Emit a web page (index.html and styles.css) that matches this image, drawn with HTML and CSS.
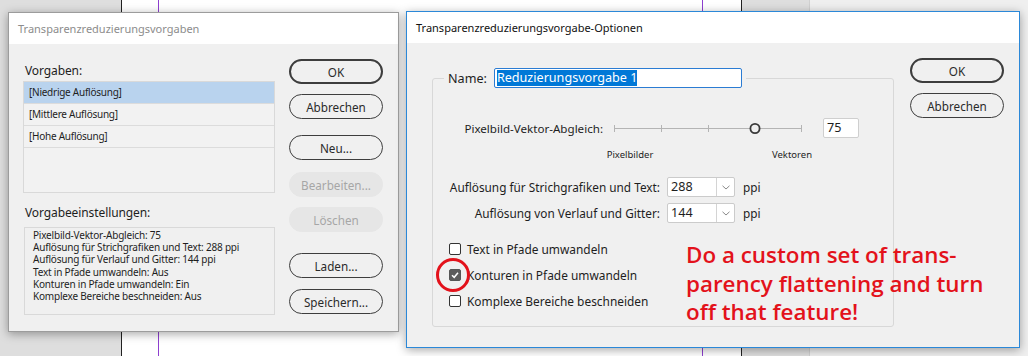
FILE: index.html
```html
<!DOCTYPE html>
<html lang="de">
<head>
  <meta charset="UTF-8" />
  <title>Transparenzreduzierungsvorgaben</title>
  <link rel="stylesheet" href="styles.css">
</head>
<body>

<div class="desk">
  <div class="page">
    <span class="rand rand-links"></span>
    <span class="rand rand-rechts"></span>
  </div>
  <div class="panel"></div>

  <!-- Dialog 1: Vorgaben -->
  <section class="dialog dialog-vorgaben">
    <div class="titel titel-inaktiv">Transparenzreduzierungsvorgaben</div>
    <div class="inhalt">
      <div class="spalte-links">
        <div class="beschriftung">Vorgaben:</div>
        <ul class="liste">
          <li class="aktiv">[Niedrige Auflösung]</li>
          <li>[Mittlere Auflösung]</li>
          <li>[Hohe Auflösung]</li>
        </ul>
        <div class="beschriftung beschriftung-2">Vorgabeeinstellungen:</div>
        <div class="einstellungen">
          <div>Pixelbild-Vektor-Abgleich: 75</div>
          <div>Auflösung für Strichgrafiken und Text: 288 ppi</div>
          <div>Auflösung für Verlauf und Gitter: 144 ppi</div>
          <div>Text in Pfade umwandeln: Aus</div>
          <div>Konturen in Pfade umwandeln: Ein</div>
          <div>Komplexe Bereiche beschneiden: Aus</div>
        </div>
      </div>
      <div class="knoepfe">
        <button class="btn btn-default">OK</button>
        <button class="btn abst-10">Abbrechen</button>
        <button class="btn abst-16">Neu...</button>
        <button class="btn btn-aus abst-12">Bearbeiten...</button>
        <button class="btn btn-aus abst-10">Löschen</button>
        <button class="btn abst-21">Laden...</button>
        <button class="btn abst-11">Speichern...</button>
      </div>
    </div>
  </section>

  <!-- Dialog 2: Optionen -->
  <section class="dialog dialog-optionen">
    <div class="titel">Transparenzreduzierungsvorgabe-Optionen</div>
    <div class="inhalt inhalt-optionen">
      <fieldset class="gruppe">
        <legend class="name-zeile">
          <span>Name:</span>
          <span class="name-feld"><span class="auswahl">Reduzierungsvorgabe 1</span></span>
        </legend>

        <div class="regler-zeile">
          <span class="label label-regler">Pixelbild-Vektor-Abgleich:</span>
          <svg class="regler" width="188" height="20" viewBox="0 0 188 20">
            <line x1="0.5" y1="10.5" x2="187.5" y2="10.5" stroke="#b4b4b4" stroke-width="1"/>
            <line x1="0.5" y1="7" x2="0.5" y2="14" stroke="#b4b4b4"/>
            <line x1="47.5" y1="7" x2="47.5" y2="14" stroke="#b4b4b4"/>
            <line x1="94.5" y1="7" x2="94.5" y2="14" stroke="#b4b4b4"/>
            <line x1="187.5" y1="7" x2="187.5" y2="14" stroke="#b4b4b4"/>
            <circle cx="141" cy="10.5" r="4.6" fill="#f0f0f0" stroke="#3a3a3a" stroke-width="1.8"/>
          </svg>
          <span class="zahl-feld">75</span>
        </div>
        <div class="regler-enden">
          <span>Pixelbilder</span>
          <span>Vektoren</span>
        </div>

        <div class="aufl-zeile">
          <span class="label label-aufl">Auflösung für Strichgrafiken und Text:</span>
          <span class="combo"><span class="combo-wert">288</span><span class="combo-pfeil"><svg width="8" height="5" viewBox="0 0 8 5"><path d="M0.5 0.8 L4 4 L7.5 0.8" fill="none" stroke="#8a8a8a" stroke-width="1"/></svg></span></span>
          <span>ppi</span>
        </div>
        <div class="aufl-zeile aufl-zeile-2">
          <span class="label label-aufl">Auflösung von Verlauf und Gitter:</span>
          <span class="combo"><span class="combo-wert">144</span><span class="combo-pfeil"><svg width="8" height="5" viewBox="0 0 8 5"><path d="M0.5 0.8 L4 4 L7.5 0.8" fill="none" stroke="#8a8a8a" stroke-width="1"/></svg></span></span>
          <span>ppi</span>
        </div>

        <div class="haken-zeile haken-erste">
          <span class="haken"></span>
          <span>Text in Pfade umwandeln</span>
        </div>
        <div class="haken-zeile">
          <span class="haken haken-an"><svg width="10" height="10" viewBox="0 0 10 10"><path d="M2 5.2 L4.2 7.3 L8 2.8" fill="none" stroke="#fff" stroke-width="1.5"/></svg></span>
          <span>Konturen in Pfade umwandeln</span>
        </div>
        <div class="haken-zeile">
          <span class="haken"></span>
          <span>Komplexe Bereiche beschneiden</span>
        </div>
      </fieldset>

      <div class="knoepfe knoepfe-optionen">
        <button class="btn btn-default">OK</button>
        <button class="btn abst-10">Abbrechen</button>
      </div>
    </div>
  </section>

  <!-- Anmerkung -->
  <span class="kreis"></span>
  <p class="notiz">Do a custom set of trans-<br>parency flattening and turn<br>off that feature!</p>
</div>

</body>
</html>
```

FILE: styles.css
```css
body {
  margin: 0;
  font-family: "Noto Sans", "Open Sans", sans-serif;
  color: #1e1e1e;
}
.desk {
  position: relative;
  width: 1028px;
  height: 356px;
  overflow: hidden;
  background-color: #dedede;
}
.page {
  position: absolute;
  left: 121px;
  top: 0;
  width: 619px;
  height: 356px;
  background-color: #fff;
  border-left: 1px solid #222;
  border-right: 1px solid #222;
}
.rand {
  position: absolute;
  top: 0;
  bottom: 0;
  width: 1px;
  background-color: #8e3fd0;
}
.rand-links { left: 36px; }
.rand-rechts { left: 580px; }
.panel {
  position: absolute;
  left: 809px;
  top: 0;
  width: 219px;
  height: 356px;
  background-color: #efefef;
  border-left: 1px solid #d0d0d0;
}

/* Dialoge */
.dialog {
  position: absolute;
  box-sizing: border-box;
  background-color: #f0f0f0;
  box-shadow: 0 2px 9px rgba(0, 0, 0, 0.35);
}
.dialog-vorgaben {
  left: 8px;
  top: 12px;
  width: 391px;
  height: 320px;
  border: 1px solid #9c9c9c;
}
.dialog-optionen {
  left: 406px;
  top: 11px;
  width: 614px;
  height: 337px;
  border: 1px solid #2b88d8;
}
.titel {
  height: 31px;
  line-height: 31px;
  padding-left: 9px;
  background-color: #fff;
  font-size: 11px;
  color: #111;
}
.titel-inaktiv {
  color: #8c8c8c;
}
.inhalt {
  display: flex;
  padding: 0 14px;
  gap: 14px;
}

/* linke Spalte */
.spalte-links {
  width: 252px;
  padding-top: 19px;
}
.beschriftung {
  font-size: 12px;
  letter-spacing: -0.1px;
  line-height: 16px;
  height: 16px;
  margin-left: 2px;
  margin-bottom: 2px;
}
.beschriftung-2 {
  margin-top: 12px;
  margin-bottom: 6px;
}
.liste {
  list-style: none;
  margin: 0;
  padding: 0;
  height: 112px;
  box-sizing: border-box;
  border: 1px solid #d9d9d9;
  background-color: #f2f2f2;
}
.liste li {
  height: 21px;
  line-height: 21px;
  padding-left: 5px;
  font-size: 10px;
  letter-spacing: -0.25px;
  border-bottom: 1px solid #dcdcdc;
}
.liste li.aktiv {
  background-color: #b9d3ee;
}
.einstellungen {
  height: 88px;
  box-sizing: border-box;
  margin-left: 1px;
  border: 1px solid #d9d9d9;
  padding: 1px 0 0 8px;
  font-size: 10px;
  letter-spacing: -0.2px;
  line-height: 12.2px;
}

/* Knoepfe */
.knoepfe {
  display: flex;
  flex-direction: column;
  width: 94px;
  padding-top: 15px;
}
.btn {
  height: 25px;
  box-sizing: border-box;
  border: 1px solid #3d3d3d;
  border-radius: 13px;
  background-color: #f0f0f0;
  font-family: inherit;
  font-size: 11.7px;
  color: #2a2a2a;
  padding: 0;
}
.btn-default {
  border-width: 2px;
}
.btn-aus {
  border-color: #e6e6e6;
  background-color: #e6e6e6;
  color: #a6a6a6;
}
.abst-10 { margin-top: 10px; }
.abst-11 { margin-top: 11px; }
.abst-12 { margin-top: 12px; }
.abst-16 { margin-top: 16px; }
.abst-21 { margin-top: 21px; }

/* Optionen */
.inhalt-optionen {
  padding: 0 15px 0 25px;
  gap: 16px;
}
.gruppe {
  width: 462px;
  height: 259px;
  box-sizing: border-box;
  margin: 25px 0 0;
  padding: 0;
  border: 1px solid #d8d8d8;
  border-radius: 3px;
  font-size: 12px;
}
.name-zeile {
  display: flex;
  align-items: center;
  gap: 7px;
  margin-left: 11px;
  padding: 0 4px;
  font-size: 12.6px;
}
.name-feld {
  display: flex;
  align-items: center;
  width: 248px;
  height: 20px;
  box-sizing: border-box;
  border: 1px solid #2b7cd3;
  border-radius: 2px;
  background-color: #fff;
  padding-left: 2px;
}
.auswahl {
  background-color: #0078d7;
  color: #fff;
  font-size: 12.6px;
  line-height: 16px;
}
.label {
  text-align: right;
}
.regler-zeile {
  display: flex;
  align-items: center;
  height: 20px;
  margin-top: 30px;
}
.label-regler {
  width: 170px;
  font-size: 11.6px;
}
.regler {
  margin-left: 11px;
}
.zahl-feld {
  width: 36px;
  height: 20px;
  box-sizing: border-box;
  margin-left: 21px;
  border: 1px solid #cfcfcf;
  border-radius: 2px;
  background-color: #fff;
  padding-left: 3px;
  font-size: 12.6px;
  line-height: 18px;
}
.regler-enden {
  display: grid;
  grid-template-columns: 60px 60px;
  column-gap: 102px;
  padding-left: 167px;
  margin-top: 11px;
  height: 12px;
  font-size: 9.5px;
  line-height: 12px;
  text-align: center;
}
.aufl-zeile {
  display: flex;
  align-items: center;
  height: 20px;
  margin-top: 16px;
  font-size: 11.8px;
}
.aufl-zeile-2 {
  margin-top: 6px;
}
.label-aufl {
  width: 227px;
  margin-right: 7px;
}
.combo {
  display: flex;
  width: 68px;
  height: 20px;
  box-sizing: border-box;
  margin-right: 8px;
  border: 1px solid #cbcbcb;
  border-radius: 2px;
  background-color: #fff;
}
.combo-wert {
  flex: 1;
  padding-left: 3px;
  font-size: 12.6px;
  line-height: 18px;
}
.combo-pfeil {
  display: flex;
  align-items: center;
  justify-content: center;
  width: 17px;
  border-left: 1px solid #d4d4d4;
}
.haken-zeile {
  display: flex;
  align-items: center;
  gap: 6px;
  height: 20px;
  margin-top: 6px;
  padding-left: 16px;
  font-size: 11.9px;
}
.haken-erste {
  margin-top: 16px;
}
.haken {
  display: flex;
  align-items: center;
  justify-content: center;
  width: 12px;
  height: 12px;
  box-sizing: border-box;
  border: 1px solid #333;
  border-radius: 2px;
  background-color: #fff;
}
.haken-an {
  border-color: #555;
  background-color: #5c5c5c;
}
.knoepfe-optionen {
  padding-top: 15px;
}

/* Anmerkung */
.kreis {
  position: absolute;
  left: 436px;
  top: 258px;
  width: 34px;
  height: 34px;
  box-sizing: border-box;
  border: 3px solid #e3121b;
  border-radius: 50%;
}
.notiz {
  position: absolute;
  left: 686px;
  top: 241px;
  margin: 0;
  font-family: "Open Sans", sans-serif;
  font-weight: 600;
  font-size: 22.4px;
  line-height: 28.5px;
  color: #e3121b;
}
```
